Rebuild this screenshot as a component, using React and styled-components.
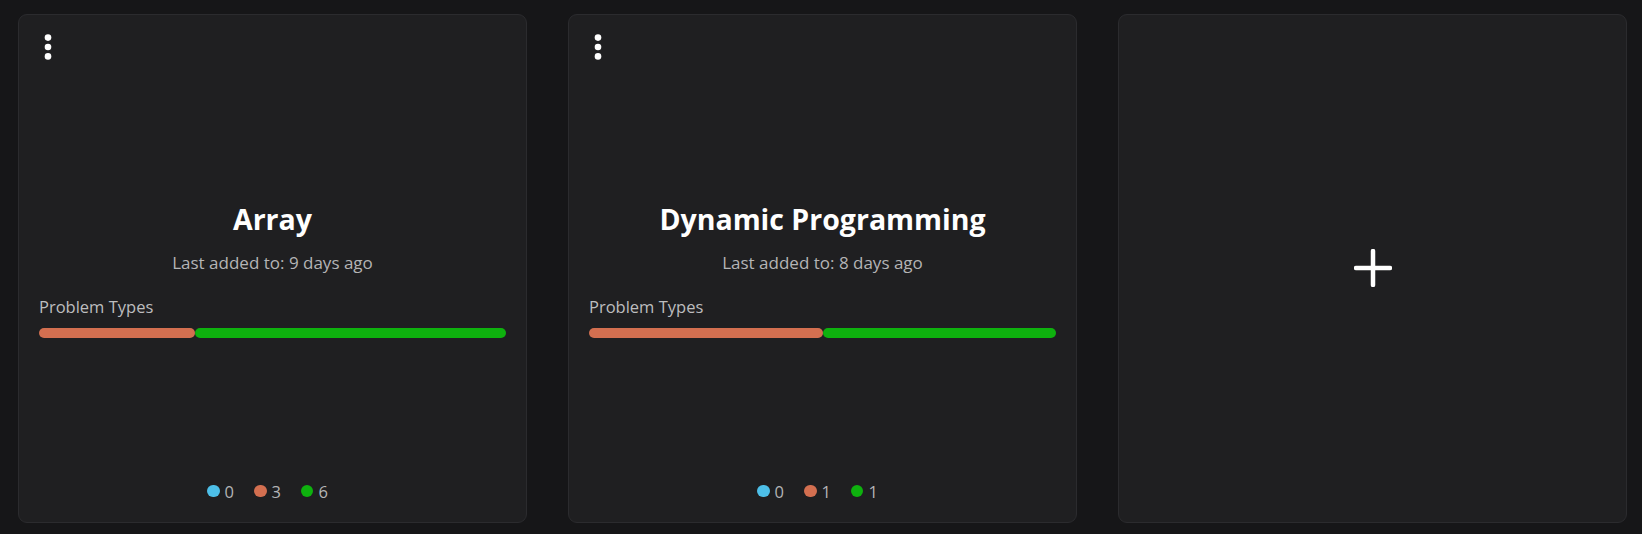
import React from 'react';
import styled, { createGlobalStyle } from 'styled-components';

const GlobalStyle = createGlobalStyle`
  html, body {
    margin: 0;
    padding: 0;
    background: #161618;
    font-family: "Open Sans", "Noto Sans", sans-serif;
  }
`;

const Page = styled.div`
  padding: 14px 15px 11px 18px;
  display: grid;
  grid-template-columns: repeat(3, 1fr);
  gap: 41px;
`;

const Card = styled.div`
  box-sizing: border-box;
  height: 509px;
  background: #1f1f21;
  border: 1px solid #2b2b2e;
  border-radius: 9px;
  padding: 19px 20px 21px;
  display: flex;
  flex-direction: column;
  color: #fff;
`;

const MenuButton = styled.button`
  align-self: flex-start;
  background: none;
  border: none;
  padding: 0;
  margin-left: 5px;
  height: 27px;
  cursor: pointer;
  display: flex;
`;

const Body = styled.div`
  flex: 1;
  display: flex;
  flex-direction: column;
  justify-content: center;
  padding-bottom: 4px;
`;

const Title = styled.h2`
  margin: 0;
  text-align: center;
  font-size: 28.5px;
  font-weight: 700;
  line-height: 36px;
  color: #ffffff;
`;

const Subtitle = styled.p`
  margin: 15px 0 0;
  text-align: center;
  font-size: 17px;
  line-height: 22px;
  color: #b4b4b6;
`;

const Label = styled.div`
  margin-top: 22px;
  font-size: 16.5px;
  line-height: 22px;
  color: #bdbdbf;
`;

const Bar = styled.div`
  margin-top: 10px;
  display: flex;
  height: 10px;
`;

const Segment = styled.div`
  height: 100%;
  border-radius: 5px;
  background: ${(p) => p.$color};
`;

const Legend = styled.div`
  display: flex;
  justify-content: center;
  gap: 10px;
  height: 20px;
  align-items: center;
`;

const LegendItem = styled.span`
  display: flex;
  align-items: center;
  gap: 5px;
  margin-right: 10px;
  font-size: 16.5px;
  color: #b4b4b6;
`;

const Dot = styled.span`
  width: 12.5px;
  height: 12.5px;
  border-radius: 50%;
  background: ${(p) => p.$color};
`;

const AddCard = styled(Card)`
  align-items: center;
  justify-content: center;
  cursor: pointer;
`;

const COLORS = { easy: '#4dbfe8', medium: '#d36f50', hard: '#0eb10e' };

const KebabIcon = () => (
  <svg width="8" height="27" viewBox="0 0 8 27">
    <circle cx="4" cy="3.6" r="3.3" fill="#fff" />
    <circle cx="4" cy="13" r="3.3" fill="#fff" />
    <circle cx="4" cy="22.4" r="3.3" fill="#fff" />
  </svg>
);

const TopicCard = ({ title, lastAdded, counts }) => {
  const total = counts.easy + counts.medium + counts.hard;
  const keys = ['easy', 'medium', 'hard'];
  return (
    <Card>
      <MenuButton aria-label="menu"><KebabIcon /></MenuButton>
      <Body>
        <Title>{title}</Title>
        <Subtitle>Last added to: {lastAdded}</Subtitle>
        <Label>Problem Types</Label>
        <Bar>
          {keys.filter((k) => counts[k] > 0).map((k) => (
            <Segment key={k} $color={COLORS[k]} style={{ width: `${(counts[k] / total) * 100}%` }} />
          ))}
        </Bar>
      </Body>
      <Legend>
        {keys.map((k) => (
          <LegendItem key={k}>
            <Dot $color={COLORS[k]} />
            {counts[k]}
          </LegendItem>
        ))}
      </Legend>
    </Card>
  );
};

export default function App() {
  return (
    <>
      <GlobalStyle />
      <Page>
        <TopicCard title="Array" lastAdded="9 days ago" counts={{ easy: 0, medium: 3, hard: 6 }} />
        <TopicCard title="Dynamic Programming" lastAdded="8 days ago" counts={{ easy: 0, medium: 1, hard: 1 }} />
        <AddCard>
          <svg width="38" height="38" viewBox="0 0 38 38">
            <path d="M19 2v34M2 19h34" stroke="#fff" strokeWidth="4.5" strokeLinecap="round" />
          </svg>
        </AddCard>
      </Page>
    </>
  );
}
